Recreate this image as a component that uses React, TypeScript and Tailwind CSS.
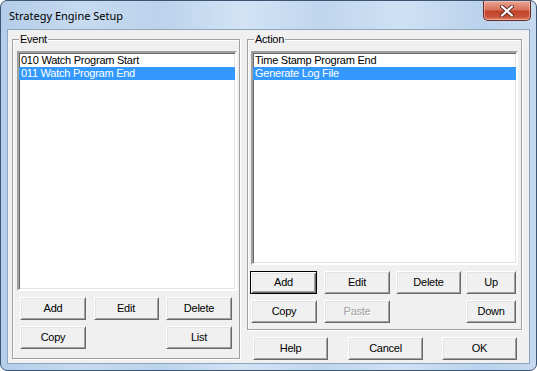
import type { ReactNode } from "react";

const btnBase =
  "flex h-[23px] items-center justify-center bg-[#f0f0f0] leading-none";
const raised =
  "border border-t-white border-l-white border-b-[#696969] border-r-[#696969] shadow-[inset_1px_1px_0_#e3e3e3,inset_-1px_-1px_0_#a0a0a0]";
const defaultRaised =
  "border border-black shadow-[inset_1px_1px_0_#fff,inset_-1px_-1px_0_#696969,inset_2px_2px_0_#e3e3e3,inset_-2px_-2px_0_#a0a0a0]";

function Btn({
  label,
  className = "",
  isDefault = false,
  disabled = false,
}: {
  label: string;
  className?: string;
  isDefault?: boolean;
  disabled?: boolean;
}) {
  return (
    <div className={`${btnBase} ${isDefault ? defaultRaised : raised} ${className}`}>
      <span
        className={
          disabled ? "text-[#a0a0a0] [text-shadow:1px_1px_0_#fff]" : "text-black"
        }
      >
        {label}
      </span>
    </div>
  );
}

function GroupBox({ title, className = "", children }: { title: string; className?: string; children: ReactNode }) {
  return (
    <div
      className={`relative flex flex-col border border-[#a0a0a0] shadow-[1px_1px_0_#fff,inset_1px_1px_0_#fff] ${className}`}
    >
      <span className="absolute -top-[7px] left-[6px] bg-[#f0f0f0] px-[1px] leading-[13px]">{title}</span>
      {children}
    </div>
  );
}

function ListBox({ items, selected, className = "" }: { items: string[]; selected: number; className?: string }) {
  return (
    <div
      className={`border-2 border-[#a0a0a0] border-b-white border-r-white bg-white shadow-[inset_1px_1px_0_#696969,inset_-1px_-1px_0_#e3e3e3] ${className}`}
    >
      <div className="pt-[1px]">
        {items.map((it, i) => (
          <div
            key={it}
            className={`h-[13px] pl-[2px] leading-[13px] whitespace-nowrap ${
              i === selected ? "bg-[#3399ff] text-white" : "text-black"
            }`}
          >
            {it}
          </div>
        ))}
      </div>
    </div>
  );
}

function CloseButton() {
  return (
    <div className="mr-[5px] flex h-[20px] w-[48px] items-center justify-center rounded-b-[5px] border border-t-0 border-[#6b2a22] bg-[linear-gradient(180deg,#e8a593_0%,#d9735d_45%,#c4412a_55%,#c9553c_85%,#e08a6e_100%)] shadow-[inset_0_0_0_1px_rgba(255,220,210,0.45)]">
      <svg width="14" height="12" viewBox="0 0 14 12">
        <path
          d="M2 1.5 L12 10.5 M12 1.5 L2 10.5"
          stroke="#5a2a22"
          strokeWidth="4"
          strokeLinecap="round"
        />
        <path
          d="M2 1.5 L12 10.5 M12 1.5 L2 10.5"
          stroke="#fff"
          strokeWidth="2.2"
          strokeLinecap="round"
        />
      </svg>
    </div>
  );
}

export default function App() {
  return (
    <div className="h-[371px] w-[537px] bg-white">
      <div className="flex h-[371px] w-[537px] flex-col rounded-[7px] border border-[#3c5572] bg-[linear-gradient(90deg,#b4cde8_0%,#c6daf0_15%,#bcd3ec_30%,#d2e3f5_45%,#c0d6ee_60%,#cfe1f4_75%,#bad2ec_90%,#c5d9ef_100%)] font-['Liberation_Sans',Arial,sans-serif] text-[11px] tracking-[-0.25px] text-black">
        <div className="flex h-[28px] items-start justify-between">
          <span className="ml-[8px] mt-[7px] font-['Noto_Sans',sans-serif] text-[11px] leading-[15px] tracking-normal text-black">
            Strategy Engine Setup
          </span>
          <CloseButton />
        </div>
        <div className="mx-[6px] mb-[6px] flex flex-1 border border-[#8fa6c0] bg-[#f0f0f0] pl-[4px] pt-[9px]">
          <GroupBox title="Event" className="h-[320px] w-[228px] pl-[4px] pr-[3px] pt-[11px]">
            <ListBox
              items={["010 Watch Program Start", "011 Watch Program End"]}
              selected={1}
              className="h-[240px] w-[220px]"
            />
            <div className="ml-[3px] mr-[4px] mt-[6px] flex justify-between">
              <Btn label="Add" className="w-[66px]" />
              <Btn label="Edit" className="w-[65px]" />
              <Btn label="Delete" className="w-[66px]" />
            </div>
            <div className="ml-[3px] mr-[4px] mt-[6px] flex justify-between">
              <Btn label="Copy" className="w-[66px]" />
              <Btn label="List" className="w-[66px]" />
            </div>
          </GroupBox>
          <div className="ml-[7px] flex w-[276px] flex-col">
            <GroupBox title="Action" className="h-[291px] w-[275px] pl-[3px] pt-[11px]">
              <ListBox
                items={["Time Stamp Program End", "Generate Log File"]}
                selected={1}
                className="h-[214px] w-[267px]"
              />
              <div className="mt-[6px] flex">
                <Btn label="Add" isDefault className="-ml-[1px] w-[67px]" />
                <Btn label="Edit" className="ml-[7px] w-[66px]" />
                <Btn label="Delete" className="ml-[6px] w-[65px]" />
                <Btn label="Up" className="ml-[5px] w-[50px]" />
              </div>
              <div className="mt-[6px] flex">
                <Btn label="Copy" className="w-[66px]" />
                <Btn label="Paste" disabled className="ml-[7px] w-[66px]" />
                <Btn label="Down" className="ml-[76px] w-[50px]" />
              </div>
            </GroupBox>
            <div className="mt-[7px] flex">
              <Btn label="Help" className="ml-[6px] w-[75px]" />
              <Btn label="Cancel" className="ml-[20px] w-[75px]" />
              <Btn label="OK" className="ml-[19px] w-[75px]" />
            </div>
          </div>
        </div>
      </div>
    </div>
  );
}
